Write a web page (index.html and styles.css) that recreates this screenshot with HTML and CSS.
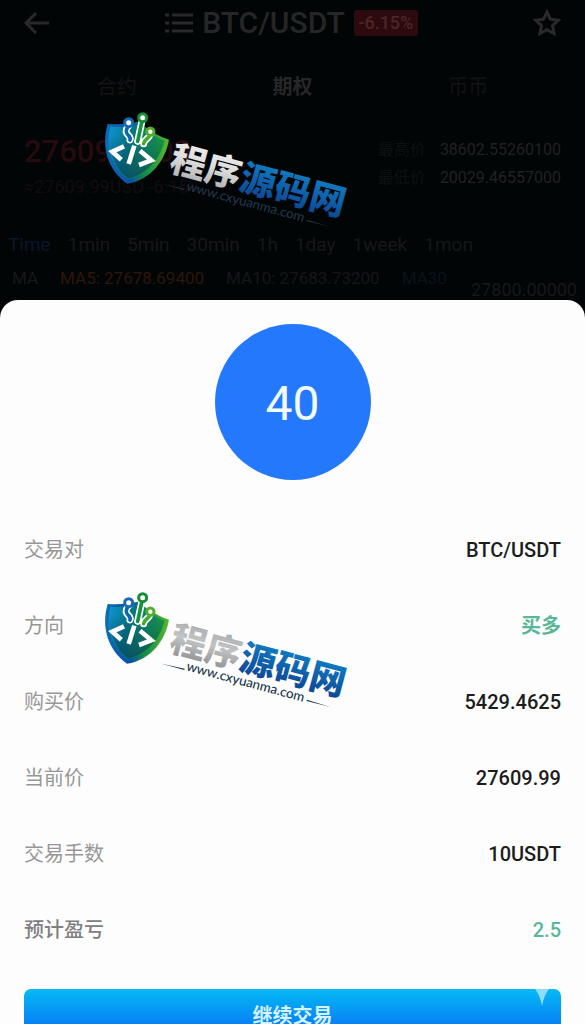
FILE: index.html
```html
<!DOCTYPE html>
<html lang="zh-CN">
<head>
<meta charset="utf-8">
<meta name="viewport" content="width=device-width, initial-scale=1">
<title>BTC/USDT</title>
<link rel="stylesheet" href="styles.css">
</head>
<body>
<div class="screen">
  <section class="market">
    <header class="topbar">
      <button class="icon-btn" type="button" aria-label="返回">
        <svg width="26" height="24" viewBox="0 0 26 24" fill="none" stroke="currentColor" stroke-width="3"><path d="M25 12H3M12 2L2 12l10 10"/></svg>
      </button>
      <div class="pair">
        <svg width="28" height="20" viewBox="0 0 28 20" fill="none" stroke="currentColor" stroke-width="3"><path d="M7 2h21M7 10h21M7 18h21M0 2h4M0 10h4M0 18h4"/></svg>
        <h1 class="pair-name">BTC/USDT</h1>
        <span class="badge">-6.15%</span>
      </div>
      <button class="icon-btn" type="button" aria-label="收藏">
        <svg width="28" height="28" viewBox="0 0 28 28" fill="none" stroke="currentColor" stroke-width="3"><path d="M14 3l3.400 7.200 7.900 1-5.800 5.400 1.500 7.900-7-3.900-7 3.900 1.500-7.900-5.800-5.400 7.900-1z"/></svg>
      </button>
    </header>
    <nav class="tabs">
      <a href="#" class="tab">合约</a>
      <a href="#" class="tab tab-on">期权</a>
      <a href="#" class="tab">币币</a>
    </nav>
    <div class="quote">
      <div>
        <div class="price">27609.9900</div>
        <div class="price-sub">≈27609.99USD -6.15%</div>
      </div>
      <dl class="range">
        <dt>最高价</dt><dd>38602.55260100</dd>
        <dt>最低价</dt><dd>20029.46557000</dd>
      </dl>
    </div>
    <div class="periods">
      <span class="period-on">Time</span><span>1min</span><span>5min</span><span>30min</span><span>1h</span><span>1day</span><span>1week</span><span>1mon</span>
    </div>
    <div class="averages">
      <span>MA</span><span class="ma5">MA5: 27678.69400</span><span class="ma10">MA10: 27683.73200</span><span class="ma30">MA30</span>
    </div>
    <div class="axis">27800.00000</div>
  </section>

  <main class="sheet">
    <div class="countdown">40</div>
    <dl class="details">
      <div class="row"><dt>交易对</dt><dd>BTC/USDT</dd></div>
      <div class="row"><dt>方向</dt><dd class="up">买多</dd></div>
      <div class="row"><dt>购买价</dt><dd>5429.4625</dd></div>
      <div class="row"><dt>当前价</dt><dd>27609.99</dd></div>
      <div class="row"><dt>交易手数</dt><dd>10USDT</dd></div>
      <div class="row row-total"><dt>预计盈亏</dt><dd class="up">2.5</dd></div>
    </dl>
    <button class="continue" type="button">继续交易
      <svg class="spark" width="14" height="17" viewBox="0 0 14 17"><path d="M0 0h14Q9 6 7 17Q5 6 0 0z" fill="#8fdcff"/></svg>
    </button>
  </main>

  <svg class="mark mark-top" viewBox="0 0 795 390">
    <defs>
      <linearGradient id="rim" x1="0" y1="0" x2="1" y2="0"><stop offset="0" stop-color="#0a6fb5"/><stop offset=".4" stop-color="#0b4fa6"/><stop offset=".6" stop-color="#118a48"/><stop offset="1" stop-color="#5cb82c"/></linearGradient>
      <linearGradient id="face" x1="0" y1="0" x2="1" y2=".35"><stop offset="0" stop-color="#0f94d6"/><stop offset=".45" stop-color="#08747f"/><stop offset="1" stop-color="#1b9a3c"/></linearGradient>
      <linearGradient id="shade" x1="0" y1="0" x2="0" y2="1"><stop offset="0" stop-color="#043c66" stop-opacity="0"/><stop offset="1" stop-color="#033a5c" stop-opacity=".65"/></linearGradient>
      <linearGradient id="silver" x1="0" y1="0" x2="0" y2="1"><stop offset="0" stop-color="#f4f4f4"/><stop offset=".5" stop-color="#dedede"/><stop offset="1" stop-color="#a5a6a8"/></linearGradient>
      <linearGradient id="steel" x1="0" y1="0" x2="0" y2="1"><stop offset="0" stop-color="#a0a1a3"/><stop offset=".5" stop-color="#c2c3c4"/><stop offset="1" stop-color="#858789"/></linearGradient>
      <linearGradient id="azure" x1="0" y1="0" x2="0" y2="1"><stop offset="0" stop-color="#128bd0"/><stop offset="1" stop-color="#0c3f8c"/></linearGradient>
      <g id="shield">
        <path d="M38 57Q90 60 130 50Q174 88 222 104C211 166 168 225 96 236C38 195 18 125 38 57z" fill="url(#rim)"/>
        <path d="M46 65Q92 68 130 59Q166 90 209 107C197 160 158 207 99 223C49 184 30 130 46 65z" fill="url(#face)"/>
        <path d="M42 102Q120 76 207 108C195 160 158 207 99 221C62 190 45 153 42 102z" fill="url(#shade)"/>
        <g fill="none" stroke="#fff" stroke-width="21" stroke-linecap="round"><path d="M101 62c-13 16-7 24 1 31q5 6 3 12M141 48l-13 61M165 86c-1 17-18 15-19 30"/></g>
        <g fill="none" stroke-width="11" stroke-linecap="round"><path d="M101 62c-13 16-7 24 1 31q5 6 3 12" stroke="#096aa9"/><path d="M141 48l-13 61" stroke="#17923f"/><path d="M165 86c-1 17-18 15-19 30" stroke="#48aa31"/></g>
        <g fill="#fff" stroke-width="9"><circle cx="101" cy="53" r="12" stroke="#1769b2"/><circle cx="143" cy="38" r="12" stroke="#168d3a"/><circle cx="166" cy="80" r="11" stroke="#54ad2f"/></g>
        <g fill="none" stroke="#fff" stroke-width="14"><path d="M87 124L52 140l27 24M118 122l-17 55M135 137l34 29-37 14"/></g>
      </g>
    </defs>
    <use href="#shield"/>
    <g transform="translate(219 195) rotate(15)">
      <text class="mark-name" fill="url(#silver)">程序<tspan fill="url(#azure)">源码网</tspan></text>
    </g>
    <g class="mark-site" transform="translate(272 256) rotate(15)">
      <text>www.cxyuanma.com</text>
      <path d="M-78 0l74 -4v4zM374 -9l74 3-74 1z"/>
    </g>
  </svg>

  <svg class="mark mark-bottom" viewBox="0 0 795 390">
    <use href="#shield"/>
    <g transform="translate(219 195) rotate(15)">
      <text class="mark-name" fill="url(#steel)">程序<tspan fill="url(#azure)">源码网</tspan></text>
    </g>
    <g class="mark-site" transform="translate(272 256) rotate(15)">
      <text>www.cxyuanma.com</text>
      <path d="M-78 0l74 -4v4zM374 -9l74 3-74 1z"/>
    </g>
  </svg>
</div>
</body>
</html>
```

FILE: styles.css
```css
* { box-sizing: border-box; }
body, h1, dl, dd { margin: 0; }
body { background: #020506; font-family: Roboto, "Noto Sans CJK SC", sans-serif; }
button { border: 0; background: none; padding: 0; color: inherit; font: inherit; }
a { color: inherit; text-decoration: none; }
svg { display: block; }

.screen { position: relative; height: 100vh; overflow: hidden; display: flex; flex-direction: column; }

.market { flex: 0 0 auto; color: #161819; }
.topbar { display: flex; align-items: center; justify-content: space-between; height: 46px; padding: 0 24px; color: #29292b; }
.pair { display: flex; align-items: center; gap: 9px; }
.pair-name { font-size: 30px; line-height: 40px; font-weight: 500; color: #252628; }
.badge { width: 64px; border-radius: 3px; background: #2d0a0d; color: #4c2528; font-size: 18px; line-height: 26px; font-weight: 500; text-align: center; }
.tabs { display: grid; grid-template-columns: repeat(3, 1fr); padding: 26px 29px; text-align: center; font-size: 20px; line-height: 30px; color: #121313; }
.tab-on { color: #262729; font-weight: 700; }

.quote { display: flex; justify-content: space-between; align-items: flex-start; padding: 6px 24px 0; }
.price { color: #250a0e; font-size: 31px; line-height: 36px; font-weight: 500; }
.price-sub { color: #120c0e; font-size: 18px; line-height: 34px; }
.range { display: grid; grid-template-columns: auto auto; gap: 0 14px; font-size: 16px; line-height: 28px; padding-top: 2px; }
.range dt { color: #0d1112; }
.range dd { color: #202224; }

.periods { display: flex; gap: 17px; padding: 24px 8px 0; font-size: 19px; line-height: 34px; }
.period-on { color: #08162b; }
.averages { display: flex; gap: 22px; padding: 0 12px; font-size: 17px; line-height: 32px; white-space: nowrap; }
.ma5 { color: #2d1708; }
.ma10 { color: #15151b; }
.ma30 { color: #09131e; }
.axis { padding-right: 8px; margin-top: -14px; text-align: right; font-size: 18px; line-height: 20px; }

.sheet { flex: 1 0 auto; padding: 24px 24px 20px; border-radius: 18px 18px 0 0; background: #fdfdfd; }
.countdown { width: 156px; height: 156px; margin: 0 auto 32px; border-radius: 50%; background: #2378fb; color: #f2fcff; font-size: 48px; line-height: 160px; text-align: center; }
.row { display: flex; justify-content: space-between; align-items: center; height: 76px; font-size: 20px; line-height: 30px; }
.row dt { color: #979797; }
.row dd { color: #1c1c1c; font-weight: 500; }
.row dd.up { color: #58b896; }
.row:nth-child(2) dd { font-weight: 700; }
.row-total dt { color: #808080; font-weight: 500; }
.continue { position: relative; display: block; width: 100%; height: 54px; margin-top: 21px; border-radius: 7px; background: linear-gradient(#05baf5, #0780f5 36px); color: #d4f3ff; font-size: 20px; font-weight: 700; line-height: 52px; }
.spark { position: absolute; top: 0; right: 12px; }

.mark { position: absolute; left: 95px; width: 265px; height: 130px; pointer-events: none; }
.mark-top { top: 105px; }
.mark-bottom { top: 585px; }
.mark-name { font-family: "Noto Sans CJK SC", sans-serif; font-size: 108px; font-weight: 900; }
.mark-site { fill: #203548; font-family: Lato, sans-serif; font-size: 40px; font-weight: 500; }
```
